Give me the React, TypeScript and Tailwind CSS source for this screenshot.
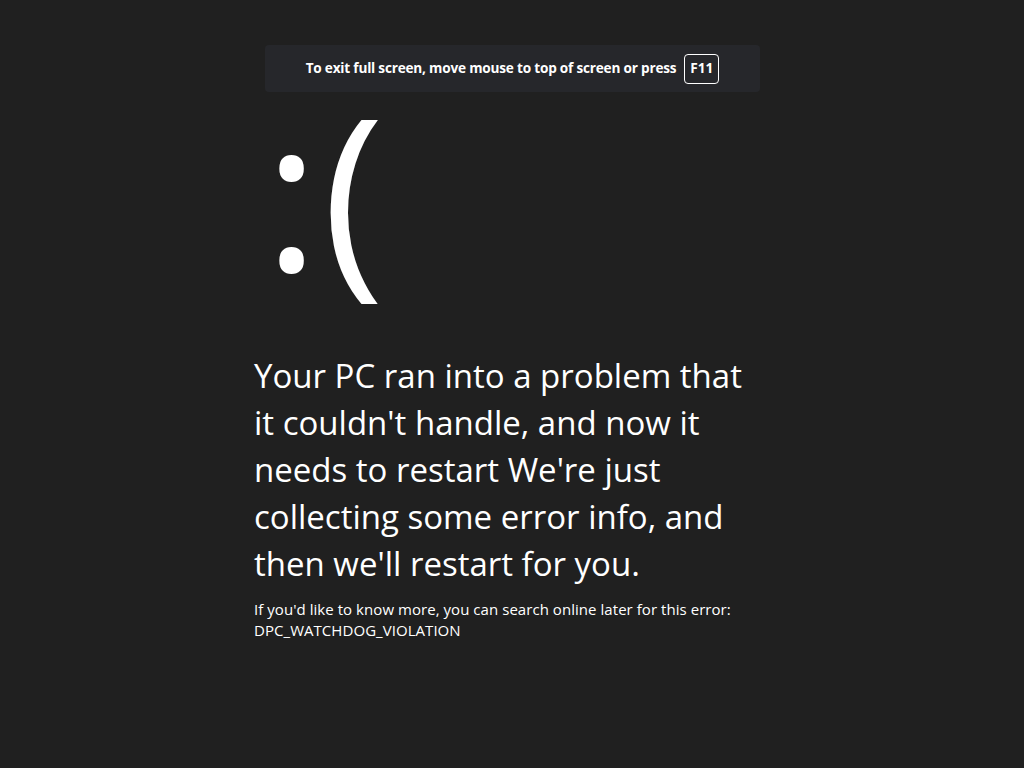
export default function App() {
  return (
    <div className="w-[1024px] h-[768px] bg-[#202020] text-white overflow-hidden" style={{ fontFamily: '"Open Sans", "Noto Sans", sans-serif' }}>
      <div className="pt-[45px] pl-[265px]">
        <div className="w-[495px] h-[47px] bg-[#26272b] rounded-[4px] flex items-center justify-center gap-[8px]">
          <span className="text-[13.6px] font-bold tracking-[-0.2px]">To exit full screen, move mouse to top of screen or press</span>
          <span className="h-[30px] w-[35px] justify-center border border-white rounded-[4px] flex items-center text-[13.6px] font-bold">F11</span>
        </div>
      </div>
      <div className="pl-[254px]">
        <div className="mt-[10px] h-[220px] text-[210px] leading-[176px] font-normal pl-[10px] tracking-[3px]">:(</div>
        <div className="mt-[30px] w-[500px] text-[33px] leading-[47px]">
          Your PC ran into a problem that it couldn't handle, and now it needs to restart We're just collecting some error info, and then we'll restart for you.
        </div>
        <div className="mt-[12px] text-[15px] leading-[21px] tracking-[0.05px]">
          If you'd like to know more, you can search online later for this error:
          <br />
          DPC_WATCHDOG_VIOLATION
        </div>
      </div>
    </div>
  );
}
